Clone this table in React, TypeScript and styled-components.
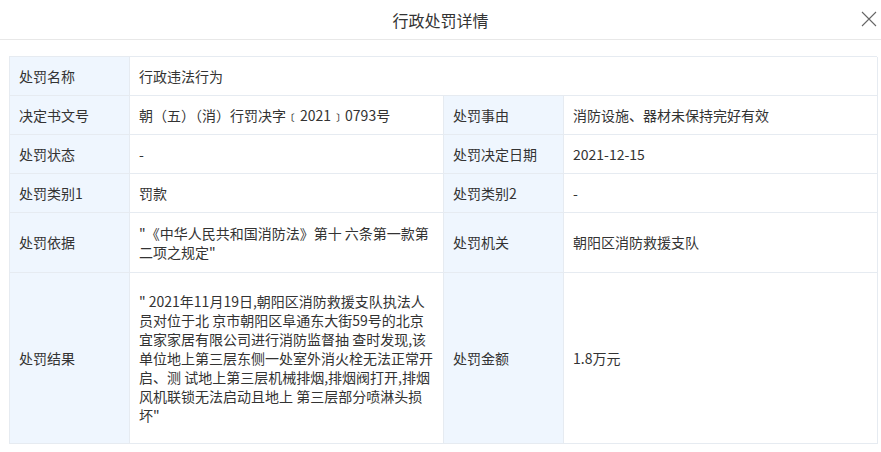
import React from "react";
import styled, { createGlobalStyle } from "styled-components";

const Global = createGlobalStyle`
  html, body { margin: 0; padding: 0; background: #fff; }
  body { font-family: "Microsoft YaHei", "Noto Sans CJK SC", "Noto Sans", sans-serif; color: #333; }
`;

const Dialog = styled.div`
  width: 881px;
  height: 452px;
  background: #fff;
  display: flex;
  flex-direction: column;
`;

const Header = styled.div`
  height: 39px;
  border-bottom: 1px solid #e8e8e8;
  display: flex;
  align-items: center;
  justify-content: center;
  position: relative;
`;

const Title = styled.div`
  font-size: 16px;
  color: #333;
  line-height: 20px;
`;

const Close = styled.button`
  position: absolute;
  right: 4px;
  top: 11px;
  width: 16px;
  height: 16px;
  padding: 0;
  border: none;
  background: transparent;
  cursor: pointer;
  display: flex;
`;

const Body = styled.div`
  padding: 16px 4px 0 9px;
`;

const Table = styled.div`
  display: grid;
  grid-template-columns: 120px 314px 120px 314px;
  border-top: 1px solid #e6ebf1;
  border-left: 1px solid #e6ebf1;
`;

const Cell = styled.div<{ $label?: boolean; $span?: number; $h: number }>`
  grid-column: span ${(p) => p.$span ?? 1};
  background: ${(p) => (p.$label ? "#eff6fe" : "#fff")};
  border-right: 1px solid #e6ebf1;
  border-bottom: 1px solid #e6ebf1;
  height: ${(p) => p.$h}px;
  box-sizing: border-box;
  padding: 0 10px 0 9px;
  display: flex;
  align-items: center;
  font-size: 14px;
  line-height: 19px;
  color: #333;
  white-space: pre-line;
`;

const rows: { h: number; cells: [string, string][] }[] = [
  { h: 39, cells: [["处罚名称", "行政违法行为"]] },
  { h: 39, cells: [["决定书文号", "朝（五）（消）行罚决字﹝2021﹞0793号"], ["处罚事由", "消防设施、器材未保持完好有效"]] },
  { h: 39, cells: [["处罚状态", "-"], ["处罚决定日期", "2021-12-15"]] },
  { h: 39, cells: [["处罚类别1", "罚款"], ["处罚类别2", "-"]] },
  {
    h: 60,
    cells: [
      ["处罚依据", "\"《中华人民共和国消防法》第十 六条第一款第\n二项之规定\""],
      ["处罚机关", "朝阳区消防救援支队"],
    ],
  },
  {
    h: 171,
    cells: [
      [
        "处罚结果",
        "\" 2021年11月19日,朝阳区消防救援支队执法人\n员对位于北 京市朝阳区阜通东大街59号的北京\n宜家家居有限公司进行消防监督抽 查时发现,该\n单位地上第三层东侧一处室外消火栓无法正常开\n启、测 试地上第三层机械排烟,排烟阀打开,排烟\n风机联锁无法启动且地上 第三层部分喷淋头损\n坏\"",
      ],
      ["处罚金额", "1.8万元"],
    ],
  },
];

export default function App() {
  return (
    <Dialog>
      <Global />
      <Header>
        <Title>行政处罚详情</Title>
        <Close aria-label="close">
          <svg width="16" height="16" viewBox="0 0 16 16">
            <path d="M1 1 L15 15 M15 1 L1 15" stroke="#666" strokeWidth="1.1" fill="none" />
          </svg>
        </Close>
      </Header>
      <Body>
        <Table>
          {rows.map((r, i) =>
            r.cells.map(([l, v], j) => (
              <React.Fragment key={`${i}-${j}`}>
                <Cell $label $h={r.h}>{l}</Cell>
                <Cell $h={r.h} $span={r.cells.length === 1 ? 3 : 1}>{v}</Cell>
              </React.Fragment>
            ))
          )}
        </Table>
      </Body>
    </Dialog>
  );
}
